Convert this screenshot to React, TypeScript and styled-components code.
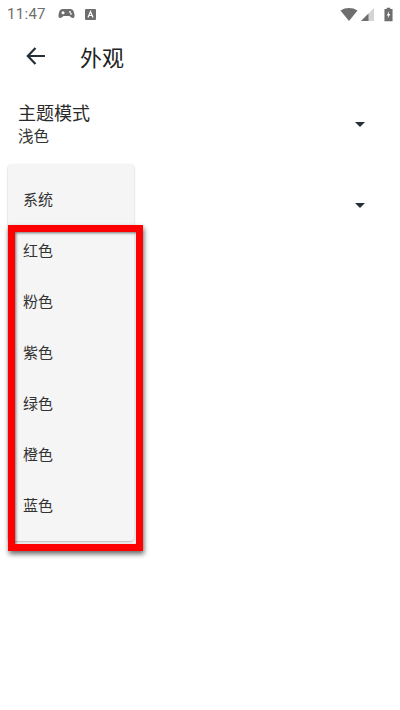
import React from "react";
import styled, { createGlobalStyle } from "styled-components";

const Global = createGlobalStyle`
  html, body { margin: 0; padding: 0; background: #fff; }
  body { font-family: Roboto, "Noto Sans CJK SC", sans-serif; }
`;
const Screen = styled.div`
  position: relative;
  width: 400px;
  height: 710px;
  overflow: hidden;
  background: #fff;
  font-family: Roboto, "Noto Sans CJK SC", sans-serif;
`;
const StatusBar = styled.div`
  height: 28px;
  display: flex;
  align-items: center;
  padding: 0 7px 0 7px;
  color: #6e6e6e;
`;
const Time = styled.span`
  font-size: 15px;
  letter-spacing: 0.3px;
  margin-right: 2px;
`;
const StatusLeft = styled.div`
  display: flex;
  align-items: center;
  gap: 10px;
  flex: 1;
`;
const StatusRight = styled.div`
  display: flex;
  align-items: center;
  gap: 3px;
`;
const AppBar = styled.div`
  height: 56px;
  display: flex;
  align-items: center;
  padding: 0 0 1px 24px;
  box-sizing: border-box;
`;
const Title = styled.h1`
  margin: 0 0 0 32px;
  font-size: 22px;
  font-weight: 400;
  color: #222;
`;
const ThemeRow = styled.div`
  height: 50px;
  margin-top: 15px;
  display: flex;
  align-items: center;
  justify-content: space-between;
  padding: 0 35px 0 18px;
`;
const ThemeText = styled.div`
  display: flex;
  flex-direction: column;
  padding-top: 1px;
`;
const ThemeName = styled.div`
  font-size: 18px;
  line-height: 25px;
  color: #2a2a2a;
`;
const ThemeValue = styled.div`
  font-size: 15.5px;
  line-height: 23px;
  color: #333;
`;
const ColorRow = styled.div`
  height: 50px;
  margin-top: 31px;
  display: flex;
  align-items: center;
  justify-content: flex-end;
  padding-right: 35px;
`;
const Arrow = styled.span`
  width: 0;
  height: 0;
  border-left: 5.5px solid transparent;
  border-right: 5.5px solid transparent;
  border-top: 5.5px solid #263038;
`;
const Menu = styled.ul`
  position: absolute;
  left: 8px;
  top: 164px;
  width: 126px;
  height: 377px;
  margin: 0;
  padding: 9px 0 0;
  box-sizing: border-box;
  list-style: none;
  background: #f5f5f5;
  border-radius: 4px;
  box-shadow: 0 1px 2px rgba(0, 0, 0, 0.3);
`;
const MenuItem = styled.li`
  height: 51px;
  display: flex;
  align-items: center;
  padding-left: 15px;
  font-size: 15px;
  color: #333;
`;
const Highlight = styled.div`
  position: absolute;
  left: 8px;
  top: 225px;
  width: 135px;
  height: 326px;
  box-sizing: border-box;
  border: 7px solid #fe0000;
  box-shadow: 1px 3px 5px rgba(0, 0, 0, 0.6), inset 1px 1px 3px rgba(0, 0, 0, 0.55);
`;

const items = ["系统", "红色", "粉色", "紫色", "绿色", "橙色", "蓝色"];

export default function App() {
  return (
    <Screen>
      <Global />
      <StatusBar>
        <StatusLeft>
          <Time>11:47</Time>
          <svg width="17" height="12" viewBox="0 0 17 12">
            <path d="M4.500 1h8C15 1 16 3 16.500 7c.4 2.800-1.800 4-3.500 2.300L11.500 8h-6L4 9.300C2.300 11-.1 9.800.5 7 1 3 2 1 4.500 1z" fill="#6e6e6e" />
            <circle cx="5" cy="4.800" r="1.500" fill="#fff" />
            <circle cx="12" cy="4" r=".9" fill="#fff" />
            <circle cx="13" cy="5.800" r=".9" fill="#fff" />
          </svg>
          <svg width="11" height="11" viewBox="0 0 11 11">
            <rect width="11" height="11" rx="1" fill="#6e6e6e" />
            <path d="M3 8.500 5.500 2.500l2.500 6M4 6.500h3" stroke="#fff" strokeWidth="1.200" fill="none" />
          </svg>
        </StatusLeft>
        <StatusRight>
          <svg width="18" height="13" viewBox="0 0 18 13">
            <path d="M0.500 2.500C5.500-.8 12.500-.8 17.500 2.500L9 13z" fill="#6e6e6e" />
          </svg>
          <svg width="13" height="13" viewBox="0 0 13 13">
            <path d="M13 0v13H0z" fill="#d4d4d4" />
            <path d="M7.500 5.500V13H0z" fill="#6e6e6e" />
          </svg>
          <svg width="9" height="15" viewBox="0 0 10 15" style={{ marginLeft: 7 }}>
            <path d="M3 0h4v1.500h2.500V15H.5V1.500H3z" fill="#6e6e6e" />
            <path d="M5.800 3.500 3 8.500h1.800L4.200 12 7 7H5.200z" fill="#fff" />
          </svg>
        </StatusRight>
      </StatusBar>
      <AppBar>
        <svg width="24" height="24" viewBox="0 0 24 24" fill="none" stroke="#263038" strokeWidth="2.200">
          <path d="M21 12H4M11.500 4 3.800 12l7.700 8" />
        </svg>
        <Title>外观</Title>
      </AppBar>
      <ThemeRow>
        <ThemeText>
          <ThemeName>主题模式</ThemeName>
          <ThemeValue>浅色</ThemeValue>
        </ThemeText>
        <Arrow />
      </ThemeRow>
      <ColorRow>
        <Arrow />
      </ColorRow>
      <Menu>
        {items.map((item) => (
          <MenuItem key={item}>{item}</MenuItem>
        ))}
      </Menu>
      <Highlight />
    </Screen>
  );
}
